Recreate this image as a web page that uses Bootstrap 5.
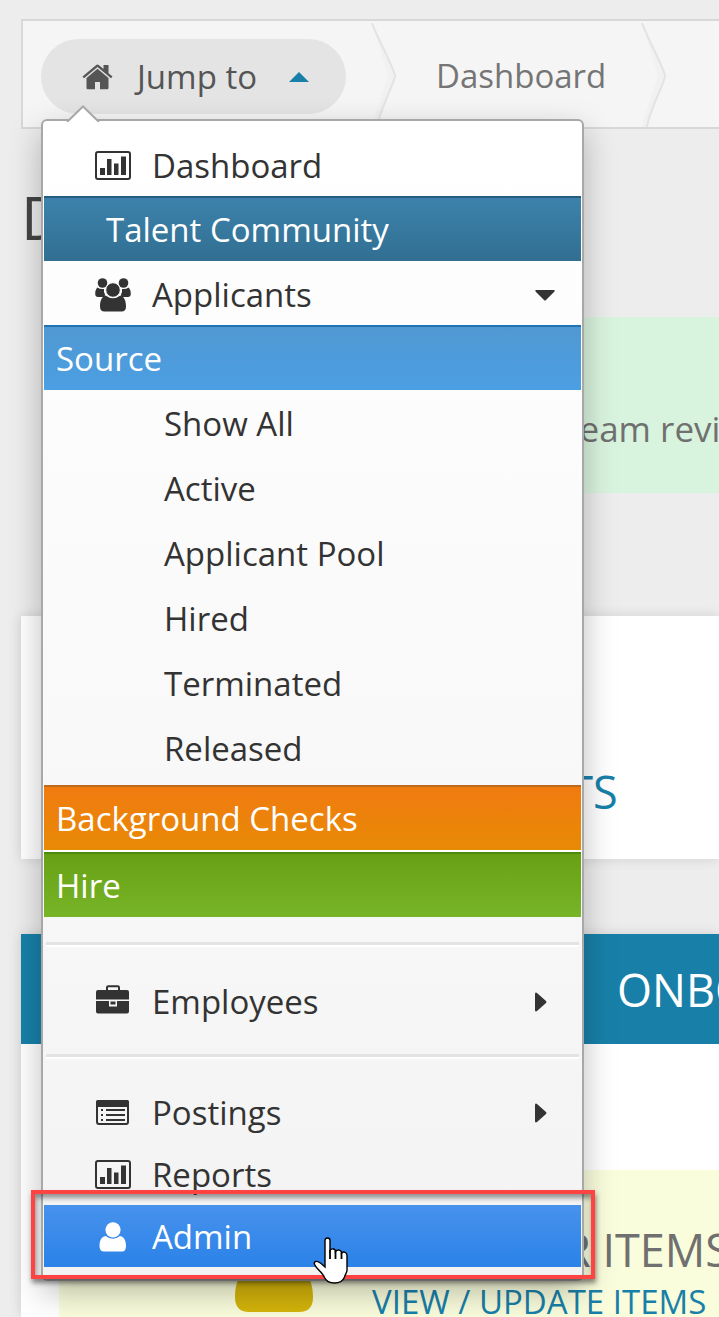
<!DOCTYPE html>
<html lang="en">
<head>
<meta charset="utf-8">
<meta name="viewport" content="width=device-width, initial-scale=1">
<title>Dashboard</title>
<link href="https://cdn.jsdelivr.net/npm/bootstrap@5.3.0/dist/css/bootstrap.min.css" rel="stylesheet">
<style>
  body { background: #ededed; font-family: "Open Sans", sans-serif; font-size: 33px; line-height: 46px; color: #707070; }
  svg { display: block; flex: none; }
  .page { min-height: 100vh; padding: 19px 0 0 21px; overflow: hidden; }

  /* breadcrumb bar */
  .crumbs { height: 110px; background: #f5f5f5; border: 2px solid #d8d8d8; border-right: 0; padding-left: 18px; }
  .crumb-link { color: #757575; text-decoration: none; margin: 0 35px 0 37px; }
  .jump { margin-top: 18px; margin-right: 25px; height: 75px; }
  .jump-btn { width: 305px; height: 75px; padding: 0 37px 0 41px; border: 0; border-radius: 38px; background: #e4e4e4; color: #555; }
  .jump-btn span { margin-left: 24px; }

  /* jump menu */
  .jump-menu { top: 80px; left: 0; width: 543px; padding: 13px 1px 12px; border: 2px solid #a8a8a8; border-radius: 6px;
    background: linear-gradient(#fff, #f3f3f3); box-shadow: 0 12px 32px rgba(0,0,0,.26); z-index: 10; }
  .notch { top: -16px; left: 23px; }
  .jump-menu ul { list-style: none; margin: 0; padding: 0; }
  .entry { display: flex; align-items: center; width: 100%; height: 62px; padding: 1px 26px 0 51px; border: 0; background: none;
    color: #333; text-decoration: none; text-align: left; }
  .entry .label-text { margin-left: 21px; flex: 1; }
  .entry-tall { height: 64px; padding-top: 4px; }
  .band { display: flex; align-items: center; height: 65px; padding: 0 12px; border-top: 2px solid; color: #fff; text-decoration: none; }
  .band-talent { padding-left: 62px; background: linear-gradient(#3d82ab, #316f92); border-color: #265d7e; }
  .band-source { background: linear-gradient(#5198d2, #4b9fe3); border-color: #2273b5; }
  .band-checks { background: linear-gradient(#f07b10, #e88a05); border-color: #bd6a1c; }
  .band-hire { background: linear-gradient(#68a014, #78b528); border-color: #4f8a0c; }
  .gap-line { height: 2px; background: #fff; }
  .jump-menu .statuses { padding: 1px 0 4px; }
  .statuses a { display: flex; align-items: center; height: 65px; padding-left: 120px; color: #333; text-decoration: none; }
  .rule { height: 5px; margin: 22px 2px; border: 0; border-top: 3px solid #e3e3e3; background: #fff; opacity: 1; }
  .rule-first { margin-top: 25px; margin-bottom: 23px; }
  .entry-on { color: #fff; background: linear-gradient(#4792ec, #2b82e8); }
  .callout-box { inset: -15px -14px -12px -13px; border: 4px solid #ff4343; box-shadow: 1px 4px 5px rgba(0,0,0,.45), inset 1px 4px 5px rgba(0,0,0,.4); pointer-events: none; }
  .hand { left: 269px; top: 32px; pointer-events: none; }

  /* page content */
  h1 { font-size: 60px; line-height: 60px; font-weight: 400; color: #444; margin: 58px 0 70px 0; }
  .notice { margin-left: 38px; padding: 88px 0 40px 508px; background: #d9f4de; font-size: 35px; line-height: 48px; }
  .tile { background: #fff; box-shadow: 0 0 12px rgba(0,0,0,.12); margin-top: 123px; padding: 146px 0 37px 338px; }
  .big-text { font-size: 45px; line-height: 60px; }
  .teal-text { color: #1880a8; text-decoration: none; }
  .onboard { margin-top: 75px; background: #fff; box-shadow: 0 0 12px rgba(0,0,0,.12); }
  .onboard-head { height: 110px; margin: 0; padding: 2px 0 0 596px; background: #1880a8; color: #fff; font-weight: 400; }
  .onboard-body { padding: 126px 0 0 38px; }
  .todo { background: #fafddc; padding-left: 176px; }
  .todo-text { margin-left: 59px; padding-top: 50px; }
  .todo-text p { margin: 0 0 7px 73px; }
  .todo-text a { display: block; line-height: 30px; }
</style>
</head>
<body>
<div class="page">
  <nav class="crumbs d-flex align-items-start" aria-label="Breadcrumb">
    <div class="jump position-relative">
      <button class="jump-btn d-flex align-items-center" type="button" aria-expanded="true">
        <svg width="31" height="26" viewBox="0 0 31 26" fill="#555"><path d="M15.500 4.800 4.500 14V24Q4.500 25.300 5.800 25.300H13V18H18V25.300H25.200Q26.500 25.300 26.500 24V14z"/><path d="M30.500 12.600 26.500 9.200V1H21.500V5L17 1.200Q15.500 0 14 1.200L.5 12.600 2 14.300 15.500 3.100 29 14.300z"/></svg>
        <span>Jump to</span>
        <svg class="ms-auto" width="20" height="10" viewBox="0 0 20 10"><path d="M0 10 10 0 20 10z" fill="#1880a8"/></svg>
      </button>
      <div class="jump-menu position-absolute">
        <svg class="notch position-absolute" width="34" height="17" viewBox="0 0 34 17"><path d="M1 17 17 1 33 17z" fill="#fff"/><path d="M1 17 17 1.500 33 17" fill="none" stroke="#a8a8a8" stroke-width="2"/></svg>
        <ul>
          <li><a class="entry" href="#dashboard">
            <svg width="36" height="29" viewBox="0 0 36 29"><rect x="1" y="1" width="34" height="27" rx="2" fill="none" stroke="#333" stroke-width="2"/><path d="M5 17h5v7H5zM12 8h4.500v16H12zM19 12.500h4.500V24H19zM26 5.500h5V24H26z" fill="#333"/></svg>
            <span class="label-text">Dashboard</span></a></li>
          <li><a class="band band-talent" href="#talent">Talent Community</a></li>
          <li><button class="entry entry-tall" type="button" aria-expanded="true">
            <svg width="36" height="34" viewBox="0 0 36 34" fill="#333"><circle cx="7.500" cy="5" r="4.800"/><circle cx="28.500" cy="5" r="4.800"/><path d="M2.500 9.500C.5 11 0 14 .3 17Q.6 19 3 19H9Q11 17.500 9 14V11Q5 11.500 2.500 9.500zM33.500 9.500c2 1.500 2.500 4.500 2.200 7.500Q35.400 19 33 19H27q-2-1.500 0-5V11q4 .5 6.500-1.500z"/><path d="M10.500 17.500C6.500 19 5 23 5 28.500Q5 33.500 9.500 33.500H26.500Q31 33.500 31 28.500C31 23 29.500 19 25.500 17.500Q18 23 10.500 17.500z"/><circle cx="18" cy="12" r="7.300" stroke="#fff"/></svg>
            <span class="label-text">Applicants</span>
            <svg width="20" height="11" viewBox="0 0 20 11"><path d="M1 0H19Q20.500 .5 19 2L11 10Q10 11 9 10L1 2Q-.5 .5 1 0z" fill="#333"/></svg></button></li>
          <li><a class="band band-source" href="#source">Source</a>
            <ul class="statuses">
              <li><a href="#all">Show All</a></li>
              <li><a href="#active">Active</a></li>
              <li><a href="#pool">Applicant Pool</a></li>
              <li><a href="#hired">Hired</a></li>
              <li><a href="#terminated">Terminated</a></li>
              <li><a href="#released">Released</a></li>
            </ul></li>
          <li><a class="band band-checks" href="#checks">Background Checks</a></li>
          <li class="gap-line" aria-hidden="true"></li>
          <li><a class="band band-hire" href="#hire">Hire</a></li>
        </ul>
        <hr class="rule rule-first">
        <button class="entry" type="button">
          <svg class="mb-1" width="36" height="29" viewBox="0 0 36 29"><path d="M12 6V2.500Q12 1.200 13.200 1.200H22.800Q24 1.200 24 2.500V6" fill="none" stroke="#333" stroke-width="2"/><path d="M1 14.500V7Q1 5 3 5H32Q34 5 34 7V14.500zM1 16H14V21.500H22V16H34V26.500Q34 28.500 32 28.500H3Q1 28.500 1 26.500zM15.500 16.500h5v3h-5z" fill="#333"/></svg>
          <span class="label-text">Employees</span>
          <svg class="me-2" width="12" height="20" viewBox="0 0 12 20"><path d="M0 1.500Q.5 0 2 1L11 9Q12 10 11 11L2 19Q.5 20 0 18.500z" fill="#333"/></svg>
        </button>
        <hr class="rule">
        <button class="entry" type="button">
          <svg width="36" height="27" viewBox="0 0 36 27"><rect x="2" y="2" width="31" height="23" rx="2" fill="none" stroke="#333" stroke-width="2"/><path d="M1 8V3Q1 1 3 1H32Q34 1 34 3V8zM6 10h2v2H6zM6 15h2v2H6zM6 20h2v2H6zM11 10H30v2H11zM11 15H30v2H11zM11 20H30v2H11z" fill="#333"/></svg>
          <span class="label-text">Postings</span>
          <svg class="me-2" width="12" height="20" viewBox="0 0 12 20"><path d="M0 1.500Q.5 0 2 1L11 9Q12 10 11 11L2 19Q.5 20 0 18.500z" fill="#333"/></svg>
        </button>
        <a class="entry" href="#reports">
          <svg width="36" height="29" viewBox="0 0 36 29"><rect x="1" y="1" width="34" height="27" rx="2" fill="none" stroke="#333" stroke-width="2"/><path d="M5 17h5v7H5zM12 8h4.500v16H12zM19 12.500h4.500V24H19zM26 5.500h5V24H26z" fill="#333"/></svg>
          <span class="label-text">Reports</span></a>
        <div class="position-relative">
          <a class="entry entry-on" href="#admin">
            <svg width="36" height="30" viewBox="0 0 36 30" fill="#fff"><path d="M10.500 14C6 15 4.500 19 4.500 24Q4.500 29.500 9 29.500H27Q31 29.500 31 24C31 19 29.500 15 25 14Q18 19.500 10.500 14z"/><circle cx="18" cy="7.800" r="7.600"/></svg>
            <span class="label-text">Admin</span></a>
          <div class="callout-box position-absolute"></div>
          <svg class="hand position-absolute" width="37" height="48" viewBox="0 0 37 48"><path d="M12 3.500C12 .2 17 .2 17 3.500V13.500C18.500 11 22.500 11.500 22.500 14.500 24.500 12 28.500 13 28.500 16 31 14 34 15.500 34 18.500V33C34 36 32 37.500 31.500 40 30 44 27 46 21.500 46S13 44 11.500 40.500C10 36.500 6.500 34 3.500 30.500 1 27 .5 25.500 2.500 24.500 6 23.500 9 27.500 12 30z" fill="#fff" stroke="#000" stroke-width="1.400"/><path d="M17 13V22M22.500 14V22M28.500 16V22" stroke="#000" stroke-width="1.800"/></svg>
        </div>
      </div>
    </div>
    <svg width="28" height="106" viewBox="0 0 28 106"><path d="M1 2 24 55 5 106H0L17 55z" fill="#f1f1f1"/><path d="M1 2C4 12 24 49 24 55S8 90 6 106" fill="none" stroke="#e3e3e3" stroke-width="2"/></svg>
    <a class="crumb-link align-self-start mt-4 py-2" href="#dashboard">Dashboard</a>
    <svg width="28" height="106" viewBox="0 0 28 106"><path d="M1 2 24 55 5 106H0L17 55z" fill="#f1f1f1"/><path d="M1 2C4 12 24 49 24 55S8 90 6 106" fill="none" stroke="#e3e3e3" stroke-width="2"/></svg>
  </nav>

  <main>
    <h1>Dashboard</h1>
    <div class="notice text-nowrap overflow-hidden">team review</div>
    <section class="tile"><a class="big-text teal-text" href="#applicants">APPLICANTS</a></section>
    <section class="onboard">
      <h2 class="onboard-head big-text d-flex align-items-center overflow-hidden">ONBOARDING</h2>
      <div class="onboard-body">
        <div class="todo d-flex align-items-end text-nowrap overflow-hidden">
          <svg class="mb-1" width="78" height="90" viewBox="0 0 78 90" fill="#d4b40a"><circle cx="39" cy="22" r="21"/><path d="M20 42C5 46 0 60 0 74Q0 89 14 89H64Q78 89 78 74C78 60 73 46 58 42Q39 56 20 42z"/></svg>
          <div class="todo-text">
            <p class="big-text">OTHER ITEMS</p>
            <a class="teal-text" href="#items">VIEW / UPDATE ITEMS</a>
          </div>
        </div>
      </div>
    </section>
  </main>
</div>
<script src="https://cdn.jsdelivr.net/npm/bootstrap@5.3.0/dist/js/bootstrap.bundle.min.js"></script>
</body>
</html>
